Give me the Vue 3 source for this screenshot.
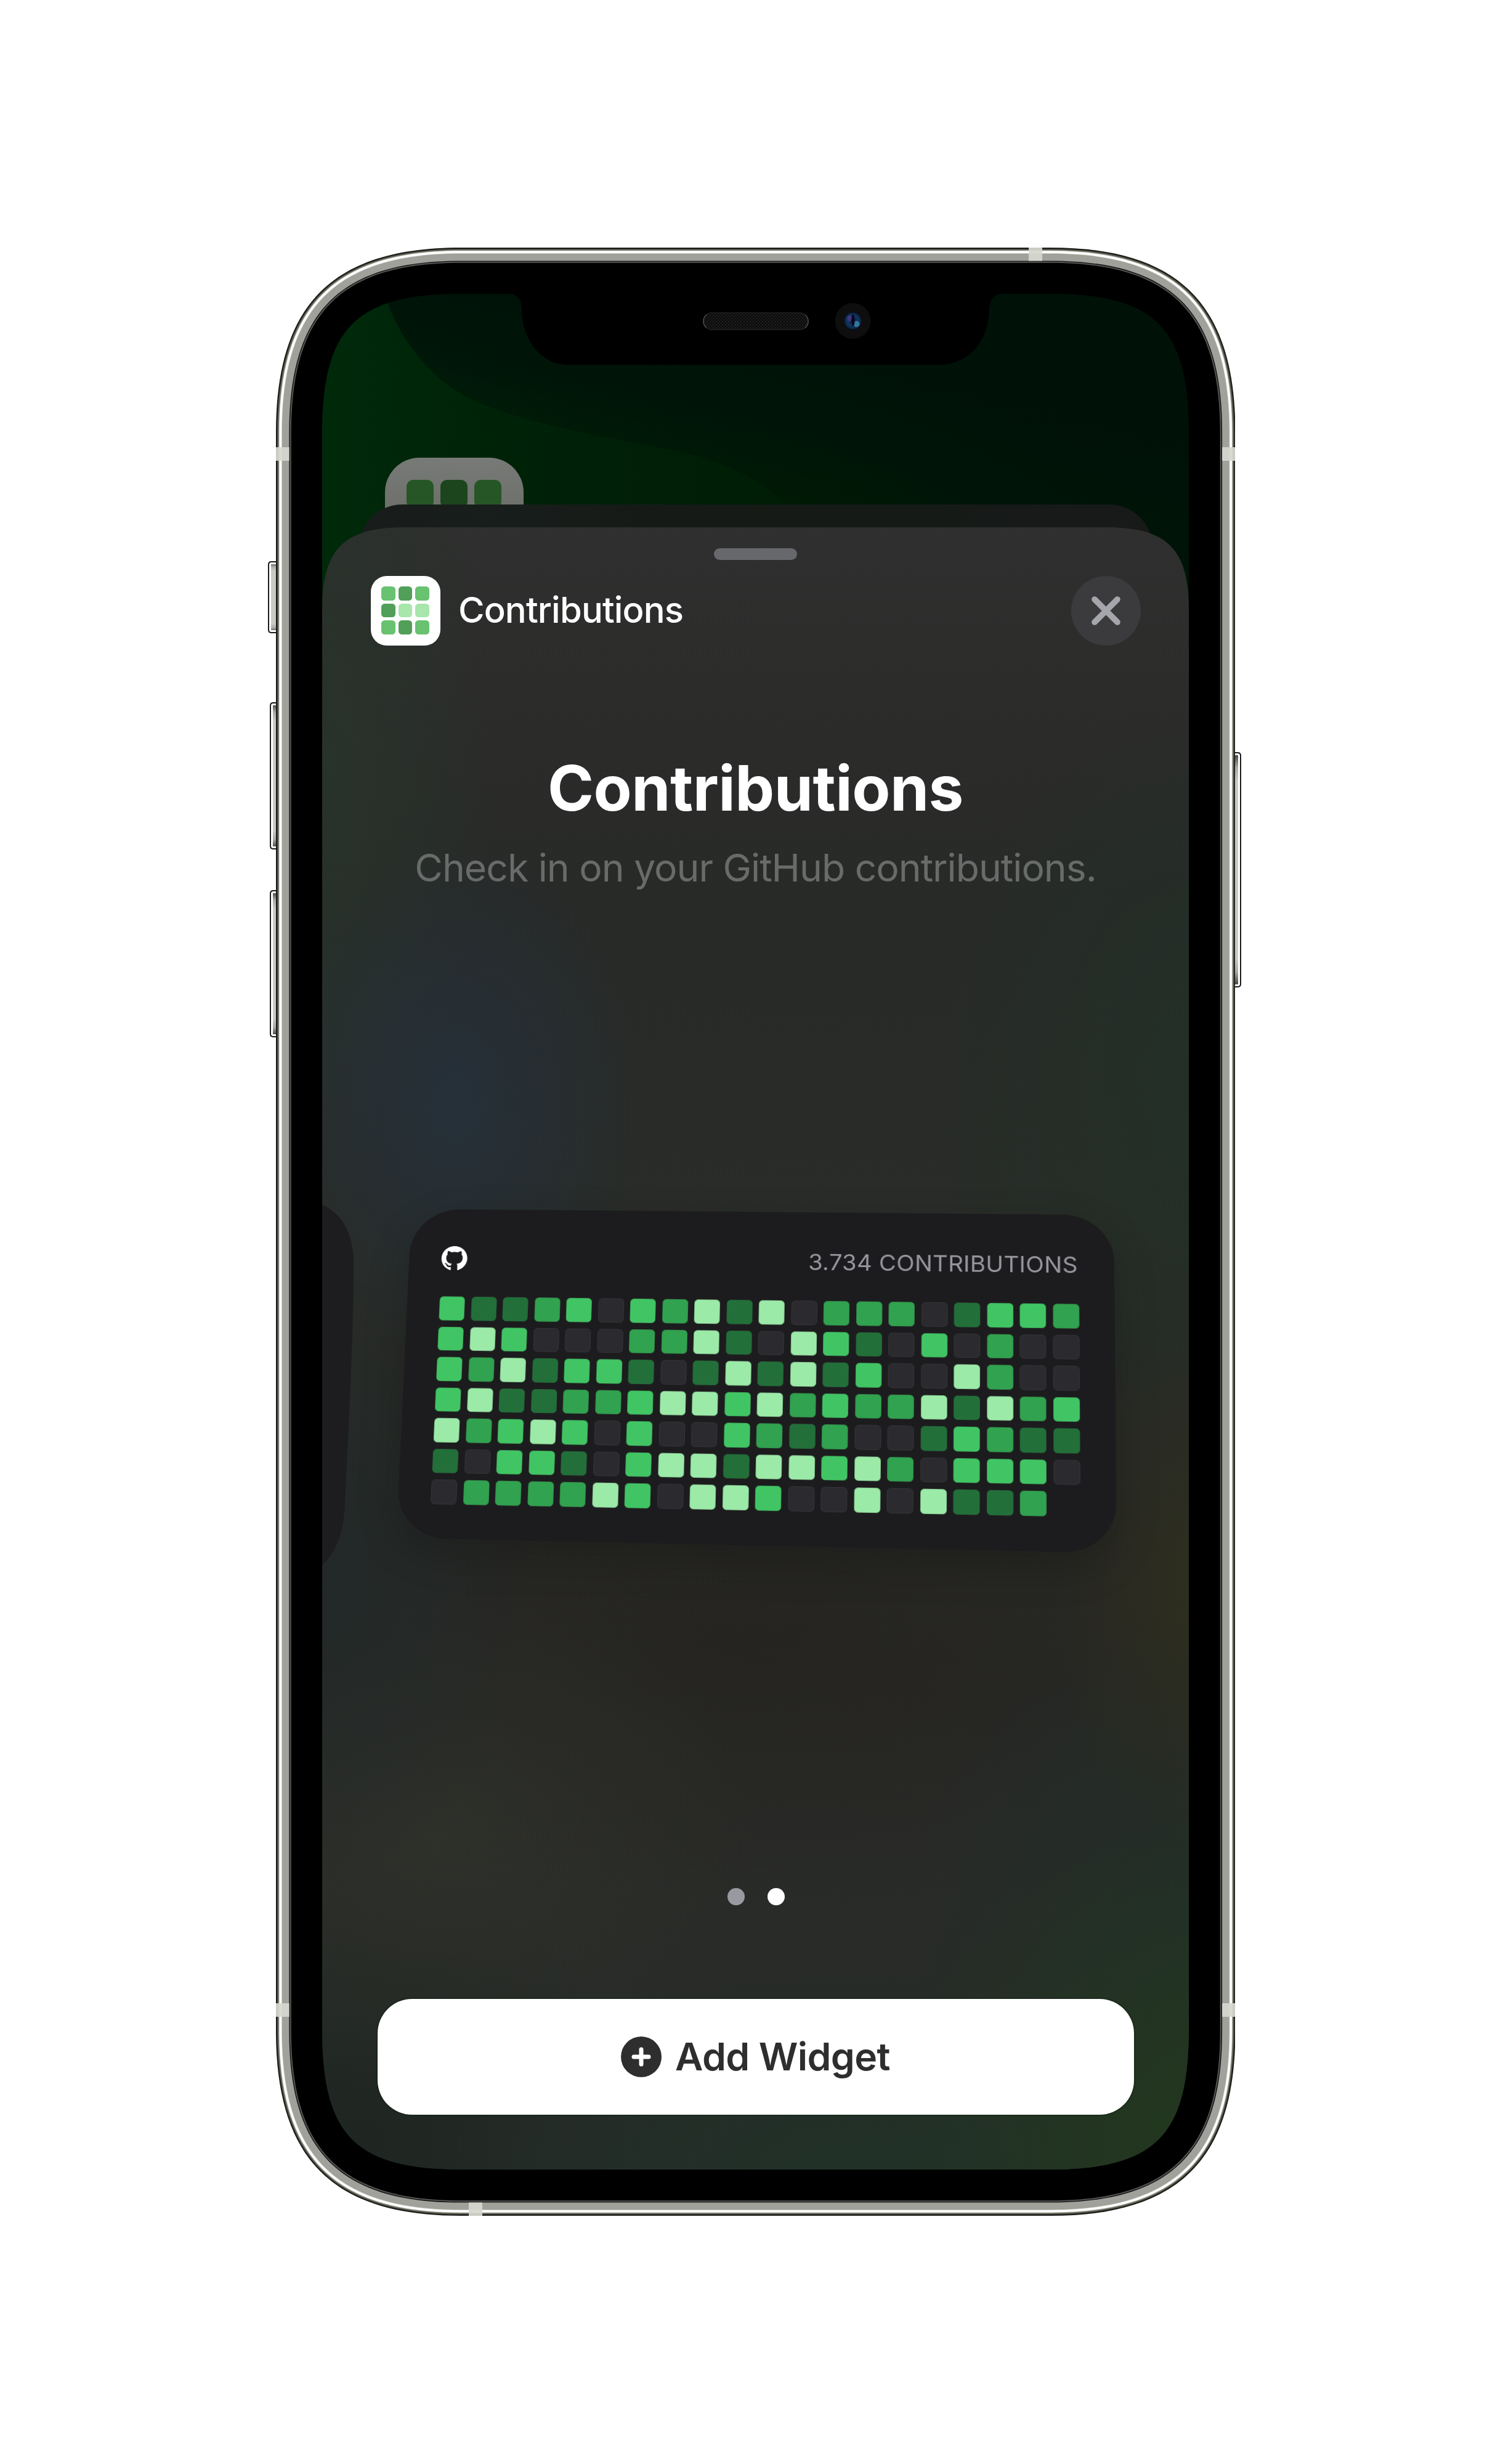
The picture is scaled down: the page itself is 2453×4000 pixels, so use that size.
<script setup>
/* Smooth-cornered outline: `inset` from the body edge, `e` is the corner length, `depth` how far the corner cuts in. */
const BODY_W = 1557.5
const BODY_H = 3195
function outline(inset, e, depth) {
  const k = (4 * e - 8 * depth) / 3
  const a = inset
  const r = BODY_W - inset
  const b = BODY_H - inset
  const h = a + e - k
  return [
    `M${a} ${a + e}C${a} ${h} ${h} ${a} ${a + e} ${a}`,
    `H${r - e}C${r - e + k} ${a} ${r} ${h} ${r} ${a + e}`,
    `V${b - e}C${r} ${b - e + k} ${r - e + k} ${b} ${r - e} ${b}`,
    `H${a + e}C${h} ${b} ${a} ${b - e + k} ${a} ${b - e}Z`,
  ].join('')
}

const layers = [
  [0, '#11130f'],
  [1.2, '#2e2e28'],
  [2.4, '#55554c'],
  [3.6, '#7d7d72'],
  [4.8, '#c9c9c2'],
  [5.6, '#ffffff'],
  [9, '#d8d8d2'],
  [9.8, '#a0a19a'],
  [21.4, '#111111'],
  [22.8, '#565656'],
  [24.8, '#000000'],
].map(([inset, fill]) => ({ fill, d: outline(inset, 300 - inset, 72 - inset * 0.293) }))

const appCells = [3, 2, 3, 2, 4, 4, 3, 2, 3]

const rows = [
  '31123032414022201332',
  '34300022410431030200',
  '32413310141413004200',
  '34112234434232241423',
  '42343030032120013211',
  '10331034414434203330',
  '0222243044300404112',
]
const cells = rows.flatMap((row, y) => [...row].map((level, x) => ({ id: `${x}-${y}`, level })))

/* Perspective tilt of the card: maps four points of the flat card to their tilted places. */
function solve(m) {
  const n = m.length
  for (let i = 0; i < n; i++) {
    let p = i
    for (let r = i + 1; r < n; r++) if (Math.abs(m[r][i]) > Math.abs(m[p][i])) p = r
    ;[m[i], m[p]] = [m[p], m[i]]
    for (let r = 0; r < n; r++) {
      if (r === i) continue
      const f = m[r][i] / m[i][i]
      for (let c = i; c <= n; c++) m[r][c] -= f * m[i][c]
    }
  }
  return m.map((row, i) => row[n] / row[i])
}
function tilt(from, to) {
  const m = []
  from.forEach(([x, y], i) => {
    const [u, v] = to[i]
    m.push([x, y, 1, 0, 0, 0, -u * x, -u * y, u])
    m.push([0, 0, 0, x, y, 1, -v * x, -v * y, v])
  })
  const [a, b, c, d, e, f, g, h] = solve(m)
  return `matrix3d(${[a, d, 0, g, b, e, 0, h, 0, 0, 1, 0, c, f, 0, 1].join(',')})`
}
const cardTilt = {
  transform: tilt(
    [
      [75, 174],
      [1072.5, 174],
      [75, 489],
      [1020, 489],
    ],
    [
      [78.7, 163.1],
      [1075.5, 175.6],
      [65.8, 461.1],
      [1022.5, 479.7],
    ],
  ),
}
</script>

<template>
  <main class="page">
    <div class="phone">
      <span class="key left silent"></span>
      <span class="key left up"></span>
      <span class="key left down"></span>
      <span class="key right power"></span>
      <svg class="body" viewBox="0 0 1557.5 3195" width="1557.5" height="3195">
        <path v-for="l in layers" :key="l.fill" :d="l.d" :fill="l.fill" />
        <g fill="#d6d7cf" fill-opacity="0.93">
          <rect x="0" y="324" width="21.5" height="22" />
          <rect x="1536" y="324" width="21.5" height="22" />
          <rect x="0" y="2850" width="21.5" height="22" />
          <rect x="1536" y="2850" width="21.5" height="22" />
          <rect x="1222" y="0" width="22" height="21.5" />
          <rect x="313" y="3173.5" width="22" height="21.5" />
        </g>
        <defs>
          <pattern id="mesh" width="5" height="5" patternUnits="userSpaceOnUse">
            <rect width="5" height="5" fill="#0b0b0b" />
            <path d="M0 0l5 5M5 0L0 5" stroke="#242424" stroke-width="0.9" />
          </pattern>
          <radialGradient id="lens" cx="0.5" cy="0.5" r="0.5">
            <stop offset="0" stop-color="#0a1030" />
            <stop offset="0.55" stop-color="#143563" />
            <stop offset="0.85" stop-color="#0d2a4a" />
            <stop offset="1" stop-color="#040a14" />
          </radialGradient>
        </defs>
        <rect x="694" y="106" width="170" height="27" rx="13.5" fill="url(#mesh)" stroke="#1c1c1c" stroke-width="2" />
        <path d="M699 109a13.5 13.5 0 0 0 0 21M859 109a13.5 13.5 0 0 1 0 21" fill="none" stroke="#484848" stroke-width="1.6" />
        <circle cx="936.5" cy="119" r="29" fill="#0e0e0f" />
        <circle cx="936.5" cy="119" r="14.5" fill="url(#lens)" />
        <ellipse cx="931" cy="115" rx="3.5" ry="5" fill="#4b3a86" opacity="0.8" />
        <ellipse cx="942.5" cy="124" rx="5" ry="5" fill="#3a86b0" opacity="0.8" />
        <ellipse cx="937" cy="118" rx="2.5" ry="10" fill="#060a1c" />
      </svg>

      <div class="screen">
        <svg class="wallpaper" viewBox="0 0 1407 600" width="1407" height="600">
          <defs>
            <linearGradient id="dusk" gradientUnits="userSpaceOnUse" x1="100" y1="0" x2="1407" y2="120">
              <stop offset="0" stop-color="#001b0c" />
              <stop offset="0.45" stop-color="#00170a" />
              <stop offset="0.75" stop-color="#001107" />
              <stop offset="1" stop-color="#001208" />
            </linearGradient>
            <linearGradient id="dusk-fade" gradientUnits="userSpaceOnUse" x1="900" y1="120" x2="840" y2="420">
              <stop offset="0" stop-color="#001208" />
              <stop offset="0.35" stop-color="#001208" stop-opacity="0.8" />
              <stop offset="1" stop-color="#001208" stop-opacity="0" />
            </linearGradient>
          </defs>
          <path
            d="M98 -10C118 60 165 135 250 175C345 215 460 232 560 252C640 268 690 290 740 330C790 370 900 420 1000 600H1407V-10Z"
            fill="url(#dusk-fade)"
          />
          <path
            d="M98 -10C118 60 165 135 250 175C345 215 460 232 560 252C760 160 1000 130 1407 190V-10Z"
            fill="url(#dusk)"
            opacity="0"
          />
        </svg>

        <div class="home-app">
          <i v-for="n in 3" :key="n" :class="{ deep: n === 2 }"></i>
        </div>
        <div class="back-sheet"></div>

        <section class="sheet">
          <div class="grabber"></div>
          <header class="bar">
            <div class="app-icon">
              <i v-for="(c, n) in appCells" :key="n" :class="'a' + c"></i>
            </div>
            <span class="app-name">Contributions</span>
            <button class="close" aria-label="Close">
              <svg viewBox="0 0 113 113" width="113" height="113">
                <path d="M38 38L75 75M75 38L38 75" stroke="#a5a5ac" stroke-width="9.6" stroke-linecap="round" />
              </svg>
            </button>
          </header>

          <h1>Contributions</h1>
          <p class="lead">Check in on your GitHub contributions.</p>

          <div class="carousel">
            <svg class="previous" viewBox="0 0 60 620" width="60" height="620">
              <path d="M0 15C32 28 51 62 51 108C51 240 42 380 37 500C35 545 24 578 0 600Z" fill="#1d1d1f" />
            </svg>
            <article class="card" :style="cardTilt">
              <div class="card-head">
                <svg class="mark" viewBox="0 0 16 16" width="43" height="43">
                  <path
                    fill="#fff"
                    d="M8 0C3.58 0 0 3.58 0 8c0 3.54 2.29 6.53 5.47 7.59.4.07.55-.17.55-.38 0-.19-.01-.82-.01-1.49-2.01.37-2.53-.49-2.69-.94-.09-.23-.48-.94-.82-1.13-.28-.15-.68-.52-.01-.53.63-.01 1.08.58 1.23.82.72 1.21 1.87.87 2.33.66.07-.52.28-.87.51-1.07-1.78-.2-3.64-.89-3.64-3.95 0-.87.31-1.59.82-2.15-.08-.2-.36-1.02.08-2.12 0 0 .67-.21 2.2.82.64-.18 1.32-.27 2-.27s1.36.09 2 .27c1.53-1.04 2.2-.82 2.2-.82.44 1.1.16 1.92.08 2.12.51.56.82 1.27.82 2.15 0 3.07-1.87 3.75-3.65 3.95.29.25.54.73.54 1.48 0 1.07-.01 1.93-.01 2.2 0 .21.15.46.55.38A8.01 8.01 0 0 0 16 8c0-4.42-3.58-8-8-8z"
                  />
                </svg>
                <span class="total">3.734 CONTRIBUTIONS</span>
              </div>
              <div class="grid">
                <i v-for="c in cells" :key="c.id" :class="'l' + c.level"></i>
              </div>
            </article>
          </div>

          <div class="dots"><i></i><i class="on"></i></div>

          <button class="add">
            <svg viewBox="0 0 66 66" width="66" height="66">
              <circle cx="33" cy="33" r="33" fill="#2e2e2f" />
              <path d="M33 21V45M21 33H45" stroke="#fff" stroke-width="7" stroke-linecap="round" />
            </svg>
            <span>Add Widget</span>
          </button>
        </section>
      </div>
    </div>
  </main>
</template>

<style>
body {
  background: #fff;
}
</style>

<style scoped>
.page {
  display: flex;
  box-sizing: border-box;
  width: 2453px;
  height: 4000px;
  padding: 402px 0 0 448px;
  background: #fff;
  font-family: Inter, 'Liberation Sans', sans-serif;
}
.phone {
  position: relative;
  box-sizing: border-box;
  width: 1557.5px;
  height: 3195px;
  padding: 75px;
}
.body {
  position: absolute;
  top: 0;
  left: -0.3px;
}
.key {
  position: absolute;
  box-sizing: border-box;
  border: 2px solid #1a1c19;
  background: linear-gradient(#3a3a38, #a9aaa5 6%, #c9cac6 12%, #c9cac6 88%, #a9aaa5 94%, #3a3a38);
  box-shadow: inset 0 0 0 3px #fff;
}
.left {
  border-right: 0;
  border-radius: 5px 0 0 5px;
}
.right {
  border-left: 0;
  border-radius: 0 5px 5px 0;
}
.silent {
  left: -13px;
  top: 508.5px;
  width: 16px;
  height: 117px;
}
.up {
  left: -10px;
  top: 738px;
  width: 14px;
  height: 239px;
}
.down {
  left: -10px;
  top: 1042.5px;
  width: 14px;
  height: 239px;
}
.power {
  left: 1553px;
  top: 819px;
  width: 13.5px;
  height: 382px;
}

.screen {
  display: flow-root;
  position: relative;
  width: 1407px;
  height: 3045px;
  background: linear-gradient(90deg, #00290a, #002007 30%, #001c04 58%, #001505 85%, #001506);
  clip-path: path(
    'M0 230C0 54 54 0 230 0H300C317 0 323 8 323.5 24C324 75 355 115.5 399.5 115.5H1000C1048 115.5 1082 80 1083.5 24C1084 8 1092 0 1107 0H1177C1353 0 1407 54 1407 230V2815C1407 2991 1353 3045 1177 3045H230C54 3045 0 2991 0 2815Z'
  );
}
.wallpaper {
  position: absolute;
  top: 0;
  left: 0;
}
.home-app {
  position: absolute;
  top: 266px;
  left: 101.5px;
  display: flex;
  gap: 11px;
  box-sizing: border-box;
  width: 225px;
  height: 225px;
  padding: 36px 35px;
  border-radius: 56px;
  background: linear-gradient(#777a76, #6c6f6a 40%);
}
.home-app i {
  width: 44.5px;
  height: 46px;
  border-radius: 11px;
  background: #265626;
}
.home-app .deep {
  background: #1c451d;
}
.back-sheet {
  position: absolute;
  top: 341.5px;
  left: 59.5px;
  width: 1288px;
  height: 200px;
  border-radius: 70px 70px 0 0;
  background: linear-gradient(90deg, #181c1a, #181e1c 16%, #161a17 35%, #161a17 75%, #181a1a 92%, #171a17);
}

.sheet {
  position: relative;
  display: flex;
  flex-direction: column;
  align-items: center;
  box-sizing: border-box;
  width: 1407px;
  height: 2666px;
  margin-top: 379px;
  padding-top: 33.5px;
  clip-path: path('M0 135C0 35 35 0 135 0H1272C1372 0 1407 35 1407 135V2666H0Z');
  background:
    radial-gradient(ellipse 300px 420px at 215px 930px, rgba(36, 49, 62, 0.8), rgba(36, 49, 62, 0) 100%),
    radial-gradient(ellipse 240px 420px at 1430px 1730px, rgba(48, 48, 29, 0.8), rgba(48, 48, 29, 0)),
    radial-gradient(ellipse 520px 560px at 1440px 2640px, rgba(34, 57, 29, 1), rgba(34, 57, 29, 0)),
    radial-gradient(ellipse 480px 500px at 1430px 2250px, rgba(32, 46, 41, 0.8), rgba(32, 46, 41, 0)),
    radial-gradient(ellipse 460px 620px at 1460px 900px, rgba(33, 49, 39, 0.85), rgba(33, 49, 39, 0)),
    radial-gradient(ellipse 700px 340px at 880px 2680px, rgba(32, 50, 40, 0.9), rgba(32, 50, 40, 0)),
    radial-gradient(ellipse 300px 700px at -20px 400px, rgba(39, 52, 42, 0.9), rgba(39, 52, 42, 0)),
    radial-gradient(ellipse 360px 500px at -20px 1700px, rgba(33, 41, 41, 0.9), rgba(33, 41, 41, 0)),
    radial-gradient(ellipse 520px 420px at 180px 2130px, rgba(46, 48, 42, 0.9), rgba(46, 48, 42, 0)),
    radial-gradient(ellipse 460px 520px at 60px 2640px, rgba(30, 38, 34, 1), rgba(30, 38, 34, 0)),
    radial-gradient(ellipse 800px 400px at 700px 1800px, rgba(37, 36, 33, 0.9), rgba(37, 36, 33, 0)),
    linear-gradient(#2e2f2e, #2c2c2b 10%, #282a28 22%, #292c28 42%, #272724 70%, #292b28 84%, #262b28);
}
.grabber {
  width: 135px;
  height: 19.5px;
  border-radius: 10px;
  background: #67686b;
}
.bar {
  display: flex;
  align-items: center;
  box-sizing: border-box;
  width: 100%;
  height: 113px;
  margin-top: 25.5px;
  padding: 0 78px 0 78.5px;
}
.app-icon {
  display: grid;
  grid-template-columns: repeat(3, 22.5px);
  grid-auto-rows: 22.8px;
  place-content: center;
  gap: 5px;
  width: 113px;
  height: 113px;
  border-radius: 26px;
  background: #fff;
}
.app-icon i {
  border-radius: 5.5px;
}
.a2 {
  background: #519f58;
}
.a3 {
  background: #68c270;
}
.a4 {
  background: #a8e6ab;
}
.app-name {
  flex: 1;
  margin: -2px 0 0 29.5px;
  color: #fff;
  font-size: 58px;
  font-weight: 550;
  line-height: 70px;
  letter-spacing: -0.85px;
}
button {
  border: 0;
  font-family: inherit;
}
.close {
  width: 113px;
  height: 113px;
  padding: 0;
  border-radius: 50%;
  background: #3b3b3e;
}
.close svg {
  display: block;
}
h1 {
  margin: 169px 0 0;
  color: #fff;
  font-size: 101.5px;
  font-weight: 700;
  line-height: 124px;
  letter-spacing: -0.5px;
}
.lead {
  margin: 30px 0 0;
  color: #686b69;
  font-size: 62.4px;
  font-weight: 400;
  line-height: 76px;
  letter-spacing: -0.98px;
  white-space: nowrap;
}
.carousel {
  position: relative;
  box-sizing: border-box;
  width: 100%;
  height: 620px;
  margin-top: 494px;
  padding: 20px 0 0 132px;
}
.previous {
  position: absolute;
  top: 0;
  left: 0;
}
.card {
  box-sizing: border-box;
  width: 1150px;
  height: 568px;
  padding: 65px 56px 0 54px;
  border-radius: 82px;
  background: #1c1c1e;
  box-shadow: 0 24px 70px rgba(0, 0, 0, 0.2);
  transform-origin: 0 0;
}
.card-head {
  display: flex;
  align-items: center;
  justify-content: space-between;
  height: 43px;
  margin-bottom: 45px;
}
.total {
  margin-right: 2px;
  color: #98979e;
  font-size: 38px;
  line-height: 43px;
  letter-spacing: 0.35px;
}
.grid {
  display: grid;
  grid-template-columns: repeat(20, 42px);
  grid-auto-rows: 41.5px;
  gap: 11px 10.5px;
}
.grid i {
  box-sizing: border-box;
  border: 1.5px solid rgba(50, 60, 52, 0.28);
  border-radius: 6.5px;
}
.grid .l0 {
  border-color: #353438;
  background: #2b2a2f;
}
.l1 {
  background: #226f3a;
}
.l2 {
  background: #31a24f;
}
.l3 {
  background: #41c564;
}
.l4 {
  background: #9ceaa8;
}
.dots {
  display: flex;
  gap: 36.5px;
  margin: 504px 0 0 2px;
}
.dots i {
  width: 28.7px;
  height: 28.7px;
  border-radius: 50%;
  background: #9a99a1;
}
.dots .on {
  background: #fff;
}
.add {
  display: flex;
  align-items: center;
  justify-content: center;
  gap: 22px;
  width: 1228px;
  height: 188px;
  margin-top: 152px;
  padding: 0;
  border-radius: 56px;
  background: #fff;
  box-shadow: 0 0 2px 1px rgba(10, 30, 14, 0.7);
  color: #2e2e2f;
  font-size: 62.4px;
  font-weight: 600;
  line-height: 76px;
  letter-spacing: -0.6px;
}
</style>
